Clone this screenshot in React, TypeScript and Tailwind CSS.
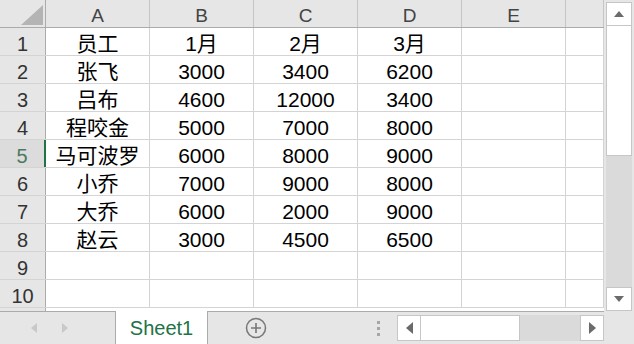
import React from 'react';

const cols = ['A', 'B', 'C', 'D', 'E', ''];

const rows: string[][] = [
  ['员工', '1月', '2月', '3月'],
  ['张飞', '3000', '3400', '6200'],
  ['吕布', '4600', '12000', '3400'],
  ['程咬金', '5000', '7000', '8000'],
  ['马可波罗', '6000', '8000', '9000'],
  ['小乔', '7000', '9000', '8000'],
  ['大乔', '6000', '2000', '9000'],
  ['赵云', '3000', '4500', '6500'],
  ['', '', '', ''],
  ['', '', '', ''],
];

const font = { fontFamily: '"Liberation Sans", "Noto Sans CJK SC", sans-serif' };

const ColWidth = ['w-[104px]', 'w-[104px]', 'w-[104px]', 'w-[104px]', 'w-[104px]', 'w-[38px]'];

const App: React.FC = () => {
  return (
    <div className="w-[634px] h-[344px] bg-[#e6e6e6] flex flex-col overflow-hidden select-none" style={font}>
      <div className="flex h-[311px]">
        {/* sheet grid */}
        <div className="w-[604px] bg-white flex flex-col overflow-hidden">
          <div className="flex h-[28px] shrink-0 bg-[#e6e6e6] border-b border-[#ababab]">
            <div className="w-[46px] shrink-0 border-r border-[#ababab] flex items-end justify-end pr-[2px] pb-[2px]">
              <svg width="22" height="20" viewBox="0 0 22 20">
                <polygon points="22,0 22,20 0,20" fill="#b4b4b4" />
              </svg>
            </div>
            {cols.map((c, i) => (
              <div
                key={i}
                className={`${ColWidth[i]} shrink-0 border-r border-[#c6c6c6] flex items-center justify-center pt-[5px] text-[19px] text-[#444]`}
              >
                {c}
              </div>
            ))}
          </div>
          {rows.map((r, ri) => (
            <div key={ri} className="flex h-[28px] shrink-0 border-b border-[#d4d4d4]">
              {ri === 4 ? (
                <div className="w-[46px] shrink-0 bg-[#dcdcdc] border-r-2 border-[#217346] flex items-center justify-center pt-[5px] text-[20px] text-[#4d7a62]">
                  {ri + 1}
                </div>
              ) : (
                <div className="w-[46px] shrink-0 bg-[#e6e6e6] border-r border-[#ababab] flex items-center justify-center pt-[5px] text-[20px] text-[#333]">
                  {ri + 1}
                </div>
              )}
              {cols.map((_, ci) => (
                <div
                  key={ci}
                  className={`${ColWidth[ci]} shrink-0 border-r border-[#d4d4d4] flex items-center justify-center pt-[5px] text-[21px] text-black whitespace-nowrap`}
                >
                  {r[ci] ?? ''}
                </div>
              ))}
            </div>
          ))}
          <div className="flex flex-1">
            <div className="w-[46px] shrink-0 bg-[#e6e6e6] border-r border-[#ababab]" />
          </div>
        </div>

        {/* vertical scrollbar */}
        <div className="w-[30px] flex flex-col pl-[2px] pr-[2px] pt-[2px] pb-0">
          <div className="h-[24px] bg-white border border-[#c6c6c6] flex items-center justify-center">
            <svg width="10" height="6" viewBox="0 0 10 6"><polygon points="5,0 10,6 0,6" fill="#6b6b6b" /></svg>
          </div>
          <div className="h-[130px] bg-white border border-[#c6c6c6] border-t-0" />
          <div className="flex-1 bg-[#dadada]" />
          <div className="h-[24px] bg-white border border-[#c6c6c6] flex items-center justify-center">
            <svg width="10" height="6" viewBox="0 0 10 6"><polygon points="0,0 10,0 5,6" fill="#6b6b6b" /></svg>
          </div>
        </div>
      </div>

      {/* sheet tabs bar */}
      <div className="flex h-[33px]">
        <div className="w-[604px] flex border-t border-[#ababab]">
          <div className="w-[115px] flex items-center gap-[23px] pl-[30px]">
            <svg width="8" height="12" viewBox="0 0 8 12"><polygon points="7,1 7,11 1,6" fill="#c8c8c8" /></svg>
            <svg width="8" height="12" viewBox="0 0 8 12"><polygon points="1,1 1,11 7,6" fill="#c8c8c8" /></svg>
          </div>
          <div className="w-[93px] -mt-px bg-white border-x border-[#ababab] flex flex-col">
            <div className="flex-1 flex items-center justify-center pt-[2px] text-[20px] text-[#217346]">Sheet1</div>
            <div className="h-[3px] bg-[#217346] mb-[1px]" />
          </div>
          <div className="w-[96px] flex items-center justify-center">
            <svg width="22" height="22" viewBox="0 0 22 22">
              <circle cx="11" cy="11" r="9.5" fill="none" stroke="#777" strokeWidth="1.5" />
              <path d="M11 6v10M6 11h10" stroke="#777" strokeWidth="1.6" />
            </svg>
          </div>
          <div className="w-[92px] flex flex-col items-center justify-center gap-[3px] pl-[56px]">
            <div className="w-[3px] h-[3px] bg-[#a6a6a6]" />
            <div className="w-[3px] h-[3px] bg-[#a6a6a6]" />
            <div className="w-[3px] h-[3px] bg-[#a6a6a6]" />
          </div>
          <div className="flex-1 flex items-start pt-[3px] pl-[1px]">
            <div className="w-[24px] h-[26px] bg-white border border-[#c6c6c6] flex items-center justify-center">
              <svg width="7" height="12" viewBox="0 0 7 12"><polygon points="7,0 7,12 0,6" fill="#6b6b6b" /></svg>
            </div>
            <div className="w-[99px] h-[26px] bg-white border border-[#c6c6c6] border-l-0" />
            <div className="flex-1 h-[26px] bg-[#dadada]" />
            <div className="w-[24px] h-[26px] bg-white border border-[#c6c6c6] flex items-center justify-center">
              <svg width="7" height="12" viewBox="0 0 7 12"><polygon points="0,0 7,6 0,12" fill="#6b6b6b" /></svg>
            </div>
          </div>
        </div>
        <div className="flex-1" />
      </div>
    </div>
  );
};

export default App;
